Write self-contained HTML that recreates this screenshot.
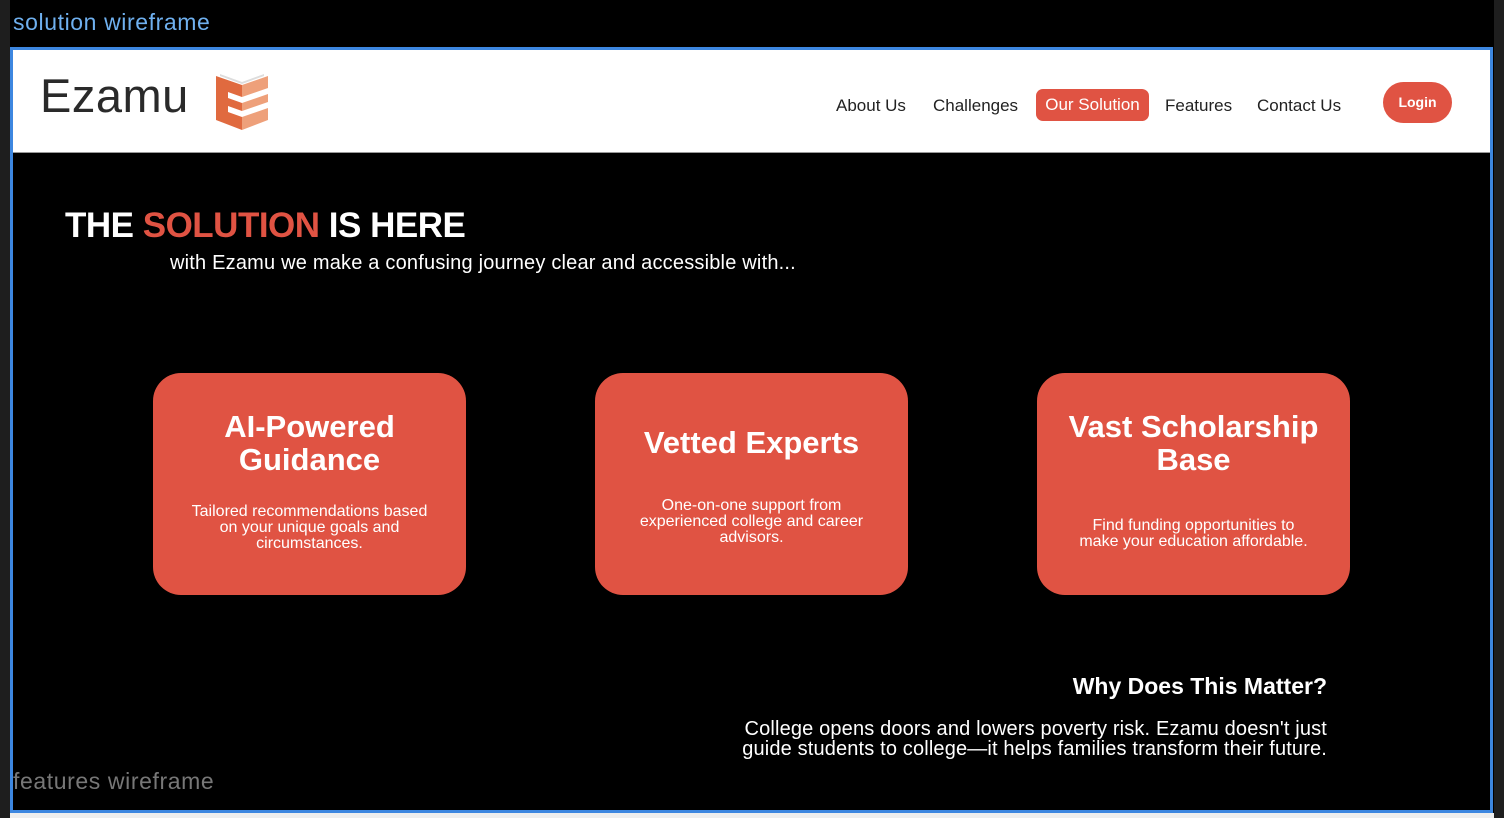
<!DOCTYPE html>
<html><head><meta charset="utf-8"><style>
*{margin:0;padding:0;box-sizing:border-box}
body{width:1504px;height:818px;background:#000;position:relative;overflow:hidden;font-family:"Liberation Sans",sans-serif}
.lstrip{position:absolute;left:0;top:0;width:10px;height:818px;background:#1e1e1e}
.rstrip{position:absolute;right:0;top:0;width:10px;height:818px;background:#1e1e1e}
.lbl{position:absolute;font-size:23px;left:13px;letter-spacing:0.6px}
.frame{position:absolute;left:10px;top:47px;width:1483px;height:766px;border:3px solid #3d87e0}
.bottom{position:absolute;left:10px;top:813px;width:1484px;height:5px;background:#eee}
.hdr{position:absolute;left:13px;top:50px;width:1477px;height:103px;background:#fff;border-bottom:1px solid #999}
.logo{position:absolute;left:27px;top:18px;font-size:47px;color:#2a2a2a;letter-spacing:0.5px}
.nav{position:absolute;top:46px;font-size:17px;color:#222}
.active{position:absolute;left:1023px;top:39px;width:113px;height:32px;background:#e05343;border-radius:7px;color:#fff;font-size:17px;text-align:center;line-height:32px}
.login{position:absolute;left:1370px;top:32px;width:69px;height:41px;background:#e05343;border-radius:21px;color:#fff;font-size:14px;font-weight:bold;text-align:center;line-height:41px}
h1{position:absolute;left:65px;top:206px;font-size:35px;color:#fff;font-weight:bold;letter-spacing:-0.5px}
.sub{position:absolute;left:170px;top:252px;font-size:20px;color:#fff;letter-spacing:0.2px}
.card{position:absolute;top:373px;width:313px;height:222px;background:#e05343;border-radius:28px;color:#fff;text-align:center}
.card h2{font-size:31px;font-weight:bold;line-height:33px;margin-top:37px}
.card p{font-size:16px;line-height:16px;padding:0 38px}
.why{position:absolute;right:177px;top:673px;font-size:23px;font-weight:bold;color:#fff}
.wp{position:absolute;right:177px;top:719px;font-size:20px;line-height:20px;color:#fff;text-align:right;letter-spacing:0.15px}
</style></head><body>
<div class="lstrip"></div><div class="rstrip"></div>
<div class="lbl" style="top:9px;color:#6fb0ef">solution wireframe</div>
<div class="frame"></div>
<div class="bottom"></div>
<div class="hdr">
<div class="logo">Ezamu</div>
<svg style="position:absolute;left:201px;top:22px" width="56" height="59" viewBox="0 0 56 59">
<polygon points="2,4 28,13 28,58 2,48" fill="#e06a3f"/>
<polygon points="28,13 54,4 54,48 28,58" fill="#eea07a"/>
<polygon points="6,2 28,10 50,2 50,4 28,12 6,4" fill="#ddd"/>
<polygon points="14,20 28,25 54,16 54,22 28,31 14,26" fill="#fff"/>
<polygon points="14,34 28,39 54,30 54,36 28,45 14,40" fill="#fff"/>
</svg>
<div class="nav" style="left:823px">About Us</div>
<div class="nav" style="left:920px">Challenges</div>
<div class="active">Our Solution</div>
<div class="nav" style="left:1152px">Features</div>
<div class="nav" style="left:1244px">Contact Us</div>
<div class="login">Login</div>
</div>
<h1>THE <span style="color:#e05343">SOLUTION</span> IS HERE</h1>
<div class="sub">with Ezamu we make a confusing journey clear and accessible with...</div>
<div class="card" style="left:153px"><h2>AI-Powered<br>Guidance</h2><p style="margin-top:28px">Tailored recommendations based on your unique goals and circumstances.</p></div>
<div class="card" style="left:595px"><h2 style="margin-top:53px">Vetted Experts</h2><p style="margin-top:39px">One-on-one support from experienced college and career advisors.</p></div>
<div class="card" style="left:1037px"><h2>Vast Scholarship<br>Base</h2><p style="margin-top:42px">Find funding opportunities to make your education affordable.</p></div>
<div class="why">Why Does This Matter?</div>
<div class="wp">College opens doors and lowers poverty risk. Ezamu doesn't just<br>guide students to college—it helps families transform their future.</div>
<div class="lbl" style="top:768px;color:#777">features wireframe</div>
</body></html>
